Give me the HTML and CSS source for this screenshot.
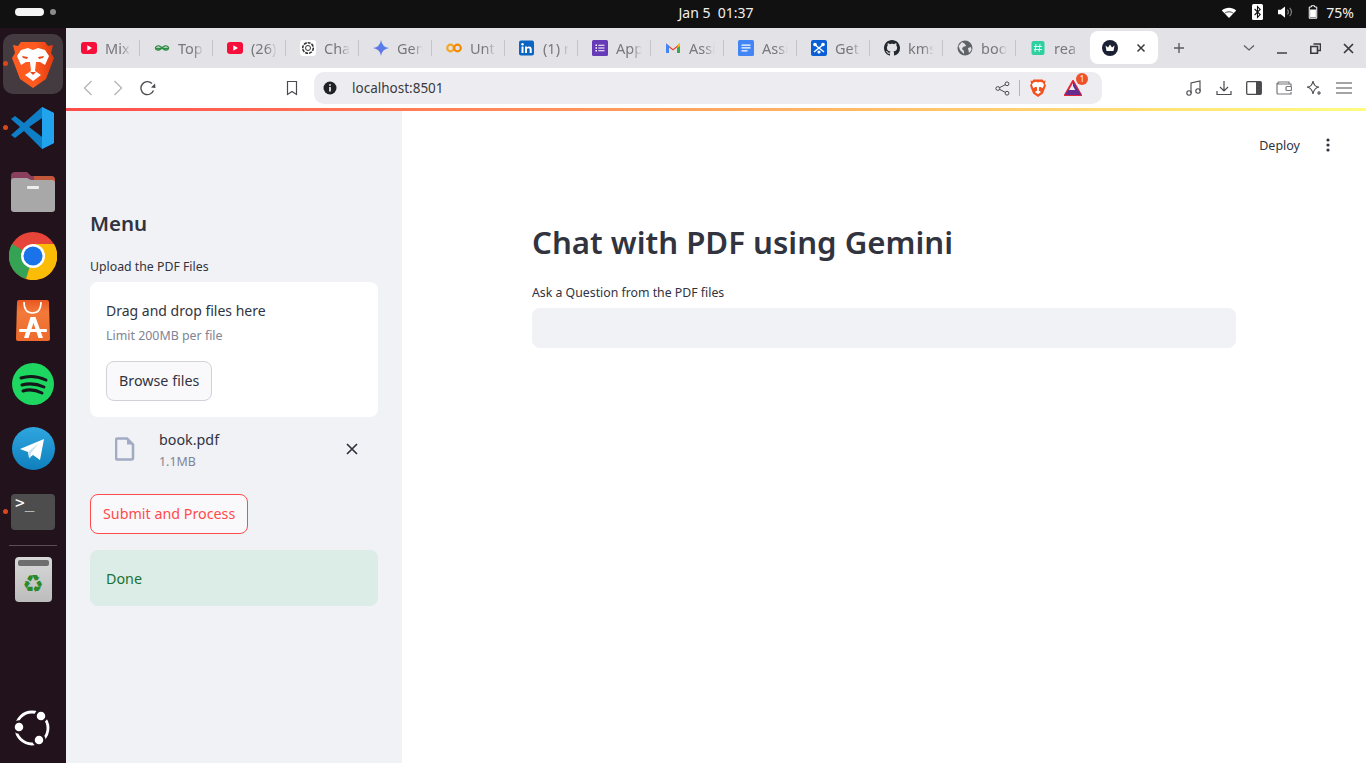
FILE: index.html
```html
<!DOCTYPE html>
<html lang="en">
<head>
  <meta charset="UTF-8">
  <meta name="viewport" content="width=device-width, initial-scale=1.0">
  <title>Chat with PDF using Gemini</title>
  <link rel="stylesheet" href="styles.css">
</head>
<body>
  <!-- Desktop top bar -->
  <header class="topbar">
    <div class="workspaces"><span class="ws-active"></span><span class="ws-dot"></span></div>
    <div class="clock">Jan 5&nbsp;&nbsp;01:37</div>
    <div class="tray">
      <svg width="16" height="13" viewBox="0 0 20 16"><path d="M1 5.5C6 .8 14 .8 19 5.5L10 15z" fill="#fff"/><path d="M4.5 9C7.5 6.5 12.5 6.5 15.5 9" stroke="#111" stroke-width="1" fill="none"/></svg>
      <svg width="11" height="16" viewBox="0 0 11 16"><rect width="11" height="16" rx="1.5" fill="#fff"/><path d="M2.6 5l5.6 5.6L5.5 13.4V2.6l2.7 2.8L2.6 11" stroke="#111" stroke-width="1.1" fill="none"/></svg>
      <svg width="15" height="14" viewBox="0 0 16 14"><path d="M0 4.500h3L7.500 1v12L3 9.500H0z" fill="#fff"/><path d="M10 4.500a3.500 3.500 0 0 1 0 5M12.500 2.500a6.500 6.500 0 0 1 0 9" stroke="#888" stroke-width="1.200" fill="none"/></svg>
      <svg width="10" height="16" viewBox="0 0 12 16"><path d="M4 .5h4v1.500h2.500v13.500h-9V2H4z" fill="none" stroke="#fff" stroke-width="1.200"/><rect x="2.500" y="5" width="7" height="9.500" fill="#fff"/></svg>
      <span class="battery">75%</span>
    </div>
  </header>

  <div class="desktop">
    <!-- Ubuntu dock -->
    <nav class="dock">
      <div class="dock-item dock-current running">
        <svg width="42" height="47" viewBox="0 0 42 47"><defs><linearGradient id="braveG" x1="0" x2="1"><stop offset=".55" stop-color="#ff5a1f"/><stop offset="1" stop-color="#e0390f"/></linearGradient></defs><path d="M9 1h24l3 4 5-1-2 8 3 5-8 21-13 9-13-9L0 17l3-5-2-8 5 1z" fill="url(#braveG)"/><path d="M9 9l7-2 5 2 5-2 7 2 4 6-4 9-5-3-4 0-1 9 6 4-8 6-8-6 6-4-1-9-4 0-5 3-4-9z" fill="#fff"/><path d="M10 15l6 1-1 2-4-1zM32 15l-6 1 1 2 4-1z" fill="#e8471a"/><path d="M18 31h6l-3 3z" fill="#e8471a"/></svg>
      </div>
      <div class="dock-item running">
        <svg width="44" height="44" viewBox="0 0 44 44"><path d="M31 1l12 6v30l-12 6L13 25 4 32 0 29l9-8L0 13l4-3 9 7z" fill="#0e7fc6"/><path d="M31 1l12 6v30l-12 6zM31 12L18 21l13 10z" fill="#22a3ee" fill-rule="evenodd"/><path d="M31 12L18 21l13 10z" fill="#21121c"/></svg>
      </div>
      <div class="dock-item">
        <svg width="46" height="42" viewBox="0 0 46 42"><path d="M1 5q0-4 4-4h12l4 4h20q4 0 4 4v10H1z" fill="#8a3f5c"/><path d="M24 5h17q4 0 4 4v10H24z" fill="#c2573a"/><path d="M1 10q0-3 3-3h13l4 2h21q3 0 3 3v26q0 3-3 3H4q-3 0-3-3z" fill="#a8a8a8"/><rect x="17" y="15" width="12" height="3" rx="1" fill="#eee"/></svg>
      </div>
      <div class="dock-item">
        <svg width="48" height="48" viewBox="0 0 48 48"><circle cx="24" cy="24" r="24" fill="#e8453a"/><path d="M24 24L3 12A24 24 0 0 0 17 47z" fill="#34a353"/><path d="M24 24l-7 23A24 24 0 0 0 45 12H24z" fill="#fbbc05"/><circle cx="24" cy="24" r="12" fill="#fff"/><circle cx="24" cy="24" r="9.500" fill="#1a73e8"/></svg>
      </div>
      <div class="dock-item">
        <svg width="34" height="41" viewBox="0 0 34 41"><defs><linearGradient id="appG" x1="0" x2="0" y1="0" y2="1"><stop offset="0" stop-color="#e9571f"/><stop offset=".3" stop-color="#f27a3a"/><stop offset="1" stop-color="#ee6a2c"/></linearGradient></defs><path d="M3 0h28q2 0 2 2l1 37q0 2-2 2H2q-2 0-2-2L1 2q0-2 2-2z" fill="url(#appG)"/><path d="M8 2q0 11 8.500 11T25 2" stroke="#fff" stroke-width="1.600" fill="none"/><path d="M14.500 17h5L27 38h-4.500l-5-15-5 15H8z" fill="#fff"/><rect x="3" y="29" width="28" height="3" rx="1" fill="#fff"/></svg>
      </div>
      <div class="dock-item">
        <svg width="42" height="42" viewBox="0 0 42 42"><circle cx="21" cy="21" r="21" fill="#1ed760"/><path d="M9 15q12-4 25 2M10 22q11-3 22 2M11 28q9-3 19 2" stroke="#14181a" stroke-width="3" stroke-linecap="round" fill="none"/></svg>
      </div>
      <div class="dock-item">
        <svg width="43" height="43" viewBox="0 0 43 43"><defs><linearGradient id="tgG" x1="0" x2="0" y1="0" y2="1"><stop offset="0" stop-color="#2fa6e0"/><stop offset="1" stop-color="#0f80bd"/></linearGradient></defs><circle cx="21.500" cy="21.500" r="21.500" fill="url(#tgG)"/><path d="M8 22l24-10-4 21-7-5-4 3-1-6z" fill="#fff"/><path d="M16 25l11-9-8 10-1 6z" fill="#c9e3f2"/></svg>
      </div>
      <div class="dock-item running">
        <div class="terminal">&gt;_</div>
      </div>
      <div class="dock-sep"></div>
      <div class="dock-item">
        <div class="trash"><span class="trash-lid"></span><span class="trash-mark">♻</span></div>
      </div>
      <div class="dock-item dock-bottom">
        <svg width="40" height="40" viewBox="0 0 40 40"><circle cx="19" cy="20" r="16" stroke="#fff" stroke-width="2.800" fill="none"/><circle cx="6" cy="19" r="5.500" fill="#fff" stroke="#21121c" stroke-width="2.500"/><circle cx="28" cy="8" r="5.500" fill="#fff" stroke="#21121c" stroke-width="2.500"/><circle cx="26" cy="32" r="5.500" fill="#fff" stroke="#21121c" stroke-width="2.500"/></svg>
      </div>
    </nav>

    <div class="browser">
      <!-- Tab strip -->
      <div class="tabstrip">
        <div class="tab">
          <svg class="favicon" viewBox="0 0 16 16"><rect y="2" width="16" height="12" rx="3" fill="#f50f3a"/><path d="M6.300 5.300v5.400L11 8z" fill="#fff"/></svg>
          <span class="tab-title">Mix</span>
        </div>
        <div class="tab">
          <svg class="favicon" viewBox="0 0 16 16"><path d="M1 8.500h14M8 8.500c-1-3-5-3.500-6.300-1.500s2.300 4.700 5 2M8 8.500c1-3 5-3.500 6.300-1.500s-2.300 4.700-5 2" stroke="#2f8d46" stroke-width="1.300" fill="none"/></svg>
          <span class="tab-title">Top</span>
        </div>
        <div class="tab">
          <svg class="favicon" viewBox="0 0 16 16"><rect y="2" width="16" height="12" rx="3" fill="#f50f3a"/><path d="M6.300 5.300v5.400L11 8z" fill="#fff"/></svg>
          <span class="tab-title">(26)</span>
        </div>
        <div class="tab">
          <svg class="favicon" viewBox="0 0 16 16"><rect width="16" height="16" rx="3" fill="#fff"/><circle cx="8" cy="8" r="5.300" fill="none" stroke="#333" stroke-width="1.600" stroke-dasharray="3 1"/><circle cx="8" cy="8" r="2.500" fill="none" stroke="#333"/></svg>
          <span class="tab-title">Cha</span>
        </div>
        <div class="tab">
          <svg class="favicon" viewBox="0 0 16 16"><defs><linearGradient id="gemG" x1="0" x2="1" y1="1" y2="0"><stop offset="0" stop-color="#7a6be0"/><stop offset="1" stop-color="#3b8bf0"/></linearGradient></defs><path d="M8 0q1 7 8 8-7 1-8 8-1-7-8-8 7-1 8-8z" fill="url(#gemG)"/></svg>
          <span class="tab-title">Gen</span>
        </div>
        <div class="tab">
          <svg class="favicon" viewBox="0 0 16 16"><circle cx="4.500" cy="8" r="3.300" fill="none" stroke="#f5a623" stroke-width="2.200"/><circle cx="11.500" cy="8" r="3.300" fill="none" stroke="#f18a00" stroke-width="2.200"/></svg>
          <span class="tab-title">Unt</span>
        </div>
        <div class="tab">
          <svg class="favicon" viewBox="0 0 16 16"><rect width="15" height="15" y=".5" rx="2" fill="#0a66c2"/><rect x="2.500" y="6.500" width="2" height="6.500" fill="#fff"/><circle cx="3.500" cy="4.300" r="1.200" fill="#fff"/><path d="M6 6.500h2v1c1-1.600 4.700-1.600 4.700 1.600V13h-2V9.500c0-1.600-2.700-1.600-2.700 0V13H6z" fill="#fff"/></svg>
          <span class="tab-title">(1) r</span>
        </div>
        <div class="tab">
          <svg class="favicon" viewBox="0 0 16 16"><rect width="16" height="16" rx="1.500" fill="#673ab7"/><path d="M3.500 4.500h1.500v1.500H3.500zM3.500 7.300h1.500v1.500H3.500zM3.500 10h1.500v1.500H3.500zM6.300 4.700h6.200v1.100H6.300zM6.300 7.500h6.200v1.100H6.300zM6.300 10.200h6.200v1.100H6.300z" fill="#fff"/></svg>
          <span class="tab-title">App</span>
        </div>
        <div class="tab">
          <svg class="favicon" viewBox="0 0 16 16"><path d="M1 13V3.500L8 9l7-5.500V13h-3V7.500L8 10.500 4 7.500V13z" fill="#ea4335"/><path d="M1 13V3.500L4 5.800V13z" fill="#4285f4"/><path d="M12 13V5.800l3-2.300V13z" fill="#34a853"/><path d="M13 4.500L15 3v3l-3 2.200z" fill="#fbbc04"/></svg>
          <span class="tab-title">Assi</span>
        </div>
        <div class="tab">
          <svg class="favicon" viewBox="0 0 16 16"><rect width="16" height="16" rx="1.500" fill="#4285f4"/><path d="M3.500 4.500h9v1.300h-9zM3.500 7.300h9v1.300h-9zM3.500 10.200h6v1.300h-6z" fill="#fff"/></svg>
          <span class="tab-title">Assi</span>
        </div>
        <div class="tab">
          <svg class="favicon" viewBox="0 0 16 16"><rect width="16" height="16" rx="2" fill="#0b5fd6"/><path d="M3 4l10 8M13 4L3 12" stroke="#fff" stroke-width="1.500"/><circle cx="4" cy="4.500" r="1.800" fill="#fff"/><circle cx="12" cy="4.500" r="1.800" fill="#fff"/><circle cx="8" cy="12" r="1.600" fill="#fff"/></svg>
          <span class="tab-title">Get</span>
        </div>
        <div class="tab">
          <svg class="favicon" viewBox="0 0 16 16"><path fill="#24292f" d="M8 0C3.580 0 0 3.580 0 8c0 3.540 2.290 6.530 5.470 7.590.4.070.55-.17.55-.38 0-.19-.01-.82-.01-1.490-2.010.37-2.530-.49-2.690-.94-.09-.23-.48-.94-.82-1.130-.28-.15-.68-.52-.01-.53.63-.01 1.080.58 1.230.82.720 1.210 1.870.87 2.330.66.070-.52.280-.87.510-1.070-1.780-.2-3.640-.89-3.640-3.950 0-.87.310-1.590.820-2.150-.08-.2-.36-1.020.08-2.120 0 0 .67-.21 2.200.82.640-.18 1.320-.27 2-.27s1.360.09 2 .27c1.530-1.040 2.200-.82 2.200-.82.440 1.100.160 1.920.080 2.120.510.560.820 1.270.820 2.150 0 3.070-1.870 3.750-3.650 3.950.290.250.540.730.540 1.480 0 1.070-.01 1.930-.01 2.200 0 .210.150.460.550.380A8.013 8.013 0 0016 8c0-4.420-3.580-8-8-8z"/></svg>
          <span class="tab-title">kms</span>
        </div>
        <div class="tab">
          <svg class="favicon" viewBox="0 0 16 16"><circle cx="8" cy="8" r="7.500" fill="#5f6368"/><path d="M5 2l3 2 1 2-3 1-1 2 2 2v3L3 10 1.500 6zM11 8l3-1 .5 3-2.500 3z" fill="#e3e3e8"/></svg>
          <span class="tab-title">boo</span>
        </div>
        <div class="tab tab-last">
          <svg class="favicon" viewBox="0 0 16 16"><rect width="13" height="14" x="1.500" y="1" rx="2" fill="#2fd0a0"/><path d="M6 4l-1 8M10 4l-1 8M4 6.500h8M4 9.500h8" stroke="#d8fff0" stroke-width="1"/></svg>
          <span class="tab-title">rea</span>
        </div>
        <div class="tab-active">
          <svg class="favicon" viewBox="0 0 16 16"><circle cx="8" cy="8" r="8" fill="#1c2033"/><path d="M3.500 5.500l2.500 2L8 4.500l2 3 2.500-2-1 5.500h-7z" fill="#fff"/></svg>
          <svg class="tab-close" width="10" height="10" viewBox="0 0 10 10"><path d="M1.500 1.500l7 7M8.500 1.500l-7 7" stroke="#3a3a3e" stroke-width="1.500"/></svg>
        </div>
        <svg class="new-tab" width="12" height="12" viewBox="0 0 12 12"><path d="M6 1v10M1 6h10" stroke="#5b5b60" stroke-width="1.400"/></svg>
        <div class="window-btns">
          <svg width="12" height="8" viewBox="0 0 12 8"><path d="M1 1.500l5 4.500 5-4.500" stroke="#5b5b60" stroke-width="1.200" fill="none"/></svg>
          <svg width="11" height="11" viewBox="0 0 11 11"><path d="M0 10h10" stroke="#4a4a4f" stroke-width="1.600"/></svg>
          <svg width="11" height="11" viewBox="0 0 11 11"><path d="M3.500 1h7v6.500h-2.500M.8 3.500h6.700v6.700H.8z" fill="none" stroke="#3a3a3e" stroke-width="1.600"/></svg>
          <svg width="11" height="11" viewBox="0 0 11 11"><path d="M1 1l9 9M10 1l-9 9" stroke="#3a3a3e" stroke-width="1.700"/></svg>
        </div>
      </div>

      <!-- Address bar -->
      <div class="toolbar">
        <svg class="nav-btn" width="10" height="16" viewBox="0 0 10 16"><path d="M8.500 1L1.500 8l7 7" stroke="#b4b4b8" stroke-width="1.300" fill="none"/></svg>
        <svg class="nav-btn" width="10" height="16" viewBox="0 0 10 16"><path d="M1.500 1l7 7-7 7" stroke="#b4b4b8" stroke-width="1.300" fill="none"/></svg>
        <svg class="reload" width="16" height="16" viewBox="0 0 16 16"><path d="M13.500 10.500A6.500 6.500 0 1 1 12 3.500" stroke="#4a4a4f" stroke-width="1.300" fill="none"/><path d="M11 7.500l4.500.5-.5-4.500z" fill="#4a4a4f"/></svg>
        <svg class="bookmark" width="12" height="16" viewBox="0 0 12 16"><path d="M1.500 1.500h9v13L6 11.500l-4.500 3z" stroke="#4a4a4f" stroke-width="1.200" fill="none"/></svg>
        <div class="omnibox">
          <svg width="14" height="14" viewBox="0 0 14 14"><circle cx="7" cy="7" r="6.500" fill="#202124"/><path d="M6.200 6h1.600v4.500H6.200zM6.200 3.300h1.600v1.500H6.200z" fill="#fff"/></svg>
          <span class="url">localhost:8501</span>
          <svg class="share" width="15" height="15" viewBox="0 0 15 15"><path d="M11.500 3L3 7.500l8.500 4.500" stroke="#4a4a4f" fill="none"/><circle cx="12" cy="2.800" r="1.900" fill="#eeeef2" stroke="#4a4a4f"/><circle cx="2.800" cy="7.500" r="1.900" fill="#eeeef2" stroke="#4a4a4f"/><circle cx="12" cy="12.200" r="1.900" fill="#eeeef2" stroke="#4a4a4f"/></svg>
          <span class="omni-sep"></span>
          <svg width="16" height="18" viewBox="0 0 42 47"><path d="M9 1h24l3 4 5-1-2 8 3 5-8 21-13 9-13-9L0 17l3-5-2-8 5 1z" fill="#f4511e"/><path d="M9 9l7-2 5 2 5-2 7 2 4 6-4 9-5-3-4 0-1 9 6 4-8 6-8-6 6-4-1-9-4 0-5 3-4-9z" fill="#fff"/></svg>
          <div class="rewards">
            <svg width="18" height="16" viewBox="0 0 18 16"><path d="M9 1l8 14H1z" fill="none" stroke="#e0253c" stroke-width="2"/><path d="M1 15h16l-3-5H4z" fill="#662d91"/><path d="M9 1l8 14h-3L9 6z" fill="#662d91"/></svg>
            <span class="rewards-badge">1</span>
          </div>
        </div>
        <div class="toolbar-right">
          <svg width="16" height="16" viewBox="0 0 16 16"><path d="M5 13V3l9-2v10" stroke="#4a4a4f" stroke-width="1.100" fill="none"/><circle cx="3" cy="13" r="2.200" fill="none" stroke="#4a4a4f" stroke-width="1.100"/><circle cx="12" cy="11" r="2.200" fill="none" stroke="#4a4a4f" stroke-width="1.100"/></svg>
          <svg width="16" height="16" viewBox="0 0 16 16"><path d="M8 1v9M4 7l4 4 4-4M1 11v3.500h14V11" stroke="#4a4a4f" stroke-width="1.200" fill="none"/></svg>
          <svg width="16" height="14" viewBox="0 0 16 14"><rect x=".7" y=".7" width="14.600" height="12.600" rx="1" fill="none" stroke="#4a4a4f" stroke-width="1.300"/><rect x="10" y="1" width="5" height="12" fill="#4a4a4f"/></svg>
          <svg width="16" height="14" viewBox="0 0 16 14"><path d="M2 3V2q0-1 1-1h10v2M15 5V3H2q-1 0-1-1v10q0 1 1 1h13v-2" fill="none" stroke="#77777c" stroke-width="1.200"/><rect x="10" y="5.500" width="5.500" height="4" rx="1" fill="none" stroke="#77777c" stroke-width="1.200"/></svg>
          <svg width="16" height="16" viewBox="0 0 16 16"><path d="M7 1q1 6 6 6-5 1-6 7-1-6-6-7 5 0 6-6z" fill="none" stroke="#4a4a4f" stroke-width="1.100"/><path d="M13 11v4M11 13h4" stroke="#4a4a4f" stroke-width="1.100"/></svg>
          <svg width="16" height="14" viewBox="0 0 16 14"><path d="M0 2h16M0 7h16M0 12h16" stroke="#4a4a4f" stroke-width="1.200"/></svg>
        </div>
      </div>
      <div class="loadbar"></div>

      <!-- Streamlit app -->
      <div class="app">
        <aside class="sidebar">
          <h2 class="menu-title">Menu</h2>
          <div class="field-label">Upload the PDF Files</div>
          <section class="dropzone">
            <div class="drop-text">Drag and drop files here</div>
            <div class="drop-limit">Limit 200MB per file</div>
            <button class="btn">Browse files</button>
          </section>
          <div class="file-row">
            <svg class="file-icon" width="20" height="24" viewBox="0 0 20 24"><path d="M2.500 1.500h9.500l6 6v13.500q0 1.500-1.500 1.500h-14q-1.500 0-1.500-1.500v-18q0-1.500 1.500-1.500z" fill="none" stroke="#a3abc4" stroke-width="2.600"/><path d="M12 1.500v6h6z" fill="#a3abc4"/></svg>
            <div class="file-info">
              <div class="file-name">book.pdf</div>
              <div class="file-size">1.1MB</div>
            </div>
            <svg width="12" height="12" viewBox="0 0 12 12"><path d="M1 1l10 10M11 1L1 11" stroke="#31333f" stroke-width="1.700"/></svg>
          </div>
          <button class="btn btn-primary">Submit and Process</button>
          <div class="alert-success">Done</div>
        </aside>
        <main class="main">
          <div class="app-header">
            <span class="deploy">Deploy</span>
            <svg width="4" height="14" viewBox="0 0 4 14"><circle cx="2" cy="2" r="1.600" fill="#31333f"/><circle cx="2" cy="7" r="1.600" fill="#31333f"/><circle cx="2" cy="12" r="1.600" fill="#31333f"/></svg>
          </div>
          <div class="block">
            <h1 class="page-title">Chat with PDF using Gemini</h1>
            <div class="field-label">Ask a Question from the PDF files</div>
            <div class="text-input"></div>
          </div>
        </main>
      </div>
    </div>
  </div>
</body>
</html>
```

FILE: styles.css
```css
* {
  box-sizing: border-box;
}

html, body {
  margin: 0;
  height: 763px;
  overflow: hidden;
}

body {
  font-family: 'Noto Sans', 'Open Sans', sans-serif;
  background-color: #fff;
  color: #31333f;
}

/* top bar */
.topbar {
  height: 28px;
  background-color: #111;
  color: #f0f0f0;
  display: grid;
  grid-template-columns: 1fr auto 1fr;
  align-items: center;
  padding: 0 12px 4px 15px;
  font-size: 14px;
}

.workspaces {
  display: flex;
  align-items: center;
  gap: 6px;
}

.ws-active {
  width: 29px;
  height: 8px;
  border-radius: 4px;
  background-color: #f5f5f5;
}

.ws-dot {
  width: 6px;
  height: 6px;
  border-radius: 50%;
  background-color: #8c8c8c;
}

.clock {
  padding-left: 63px;
}

.tray {
  display: flex;
  justify-content: flex-end;
  align-items: center;
  gap: 15px;
}

.battery {
  margin-left: -7px;
}

.desktop {
  display: flex;
  height: 735px;
}

/* dock */
.dock {
  width: 66px;
  flex-shrink: 0;
  background-color: #21121c;
  display: flex;
  flex-direction: column;
  padding: 4px 0 3px;
}

.dock-item {
  position: relative;
  height: 64px;
  flex-shrink: 0;
  display: flex;
  align-items: center;
  justify-content: center;
}

.dock-current::before {
  content: '';
  position: absolute;
  left: 3px;
  top: 2px;
  width: 60px;
  height: 60px;
  border-radius: 10px;
  background-color: #433b40;
}

.dock-current svg {
  position: relative;
}

.running::after {
  content: '';
  position: absolute;
  left: 3px;
  top: 29px;
  width: 5px;
  height: 5px;
  border-radius: 50%;
  background-color: #d9481c;
}

.terminal {
  width: 44px;
  height: 36px;
  border-radius: 4px;
  background-color: #4d4d4d;
  color: #fff;
  font-family: 'DejaVu Sans Mono', monospace;
  font-size: 16px;
  line-height: 14px;
  padding: 2px 4px;
}

.dock-sep {
  height: 1px;
  flex-shrink: 0;
  margin: 1px 9px 1px;
  background-color: #5a4f56;
}

.trash {
  width: 37px;
  height: 45px;
  border-radius: 4px;
  background: linear-gradient(#d8d8d8, #bcbcbc);
  padding: 3px;
  text-align: center;
}

.trash-lid {
  display: block;
  height: 6px;
  border-radius: 2px;
  background-color: #6e6e6e;
}

.trash-mark {
  display: block;
  margin-top: 3px;
  font-family: 'DejaVu Sans', sans-serif;
  font-size: 24px;
  line-height: 30px;
  color: #2a8a2a;
}

.dock-bottom {
  margin-top: auto;
}

/* browser */
.browser {
  flex: 1;
  min-width: 0;
  display: flex;
  flex-direction: column;
}

.tabstrip {
  height: 40px;
  flex-shrink: 0;
  background-color: #e2e2e7;
  display: flex;
  align-items: center;
  padding-left: 1px;
}

.tab {
  width: 73px;
  height: 16px;
  flex-shrink: 0;
  display: flex;
  align-items: center;
  padding-left: 14px;
  border-right: 1px solid #c4c4c9;
}

.tab-last {
  width: 74px;
  border-right: none;
}

.favicon {
  width: 16px;
  height: 16px;
  flex-shrink: 0;
}

.tab-title {
  margin-left: 8px;
  width: 26px;
  font-size: 14.5px;
  line-height: 20px;
  color: #77777c;
  white-space: nowrap;
  overflow: hidden;
  -webkit-mask-image: linear-gradient(to right, #000 60%, transparent);
  mask-image: linear-gradient(to right, #000 60%, transparent);
}

.tab-active {
  width: 68px;
  height: 33px;
  margin-top: -1px;
  flex-shrink: 0;
  display: flex;
  align-items: center;
  justify-content: space-between;
  padding: 0 12px;
  background-color: #fff;
  border-radius: 8px;
}

.new-tab {
  margin-left: 15px;
}

.window-btns {
  margin-left: auto;
  display: flex;
  align-items: center;
  gap: 22px;
  padding-right: 12px;
}

.toolbar {
  height: 40px;
  flex-shrink: 0;
  background-color: #fff;
  display: flex;
  align-items: center;
  padding-left: 17px;
}

.nav-btn {
  margin-right: 20px;
}

.reload {
  margin-left: -3px;
}

.bookmark {
  margin-left: 130px;
}

.omnibox {
  width: 788px;
  height: 32px;
  margin-left: 16px;
  display: flex;
  align-items: center;
  padding: 0 20px 0 9px;
  background-color: #ededf1;
  border-radius: 10px;
}

.url {
  margin-left: 15px;
  font-size: 13.5px;
  color: #3a3a3e;
}

.share {
  margin-left: auto;
}

.omni-sep {
  width: 1px;
  height: 16px;
  margin: 0 10px 0 9px;
  background-color: #b5b5ba;
}

.rewards {
  position: relative;
  display: flex;
  margin-left: 18px;
}

.rewards-badge {
  position: absolute;
  top: -7px;
  right: -6px;
  width: 12px;
  height: 12px;
  border-radius: 50%;
  background-color: #f0512b;
  color: #fff;
  font-size: 8px;
  line-height: 12px;
  text-align: center;
}

.toolbar-right {
  margin-left: auto;
  display: flex;
  align-items: center;
  gap: 14px;
  padding-right: 14px;
}

.loadbar {
  height: 3px;
  flex-shrink: 0;
  background: linear-gradient(to right, #ff4b4b, #ffa860 50%, #fffd80);
}

/* streamlit */
.app {
  flex: 1;
  display: flex;
  min-height: 0;
}

.sidebar {
  width: 336px;
  flex-shrink: 0;
  background-color: #f0f2f6;
  padding: 96px 24px 0;
}

.menu-title {
  margin: 0 0 19px;
  font-size: 20.5px;
  line-height: 32px;
  font-weight: 600;
}

.field-label {
  font-size: 12.3px;
  line-height: 18px;
}

.dropzone {
  margin-top: 6px;
  height: 135px;
  padding: 16px;
  background-color: #fff;
  border-radius: 8px;
}

.drop-text {
  font-size: 14px;
  line-height: 26px;
}

.drop-limit {
  margin-top: 2px;
  font-size: 12.4px;
  line-height: 20px;
  color: #808495;
}

.btn {
  display: block;
  height: 40px;
  padding: 0 12px 1px;
  font-family: inherit;
  font-size: 14.3px;
  color: #31333f;
  background-color: #f9f9fb;
  border: 1px solid #d0d2d8;
  border-radius: 8px;
}

.dropzone .btn {
  margin-top: 15px;
}

.file-row {
  display: flex;
  align-items: center;
  height: 64px;
  margin-bottom: 13px;
  padding: 0 20px 0 25px;
}

.file-info {
  flex: 1;
  margin-left: 24px;
  padding-top: 2px;
}

.file-name {
  font-size: 14.3px;
  line-height: 22px;
}

.file-size {
  margin-top: 1px;
  font-size: 12.4px;
  line-height: 20px;
  color: #808495;
}

.btn-primary {
  color: #ff4b4b;
  border-color: #ff4b4b;
}

.alert-success {
  margin-top: 16px;
  height: 56px;
  padding: 0 16px;
  line-height: 58px;
  font-size: 14.3px;
  color: #177233;
  background-color: #dcece6;
  border-radius: 8px;
}

.main {
  flex: 1;
  min-width: 0;
}

.app-header {
  display: flex;
  justify-content: flex-end;
  align-items: center;
  gap: 26px;
  height: 68px;
  padding-right: 36px;
  font-size: 12.5px;
}

.block {
  width: 704px;
  margin-left: 130px;
  padding-top: 43px;
}

.page-title {
  margin: 0 0 22px;
  font-size: 31.2px;
  line-height: 40px;
  font-weight: 600;
}

.text-input {
  height: 40px;
  margin-top: 6px;
  background-color: #f0f2f6;
  border-radius: 8px;
}
```
